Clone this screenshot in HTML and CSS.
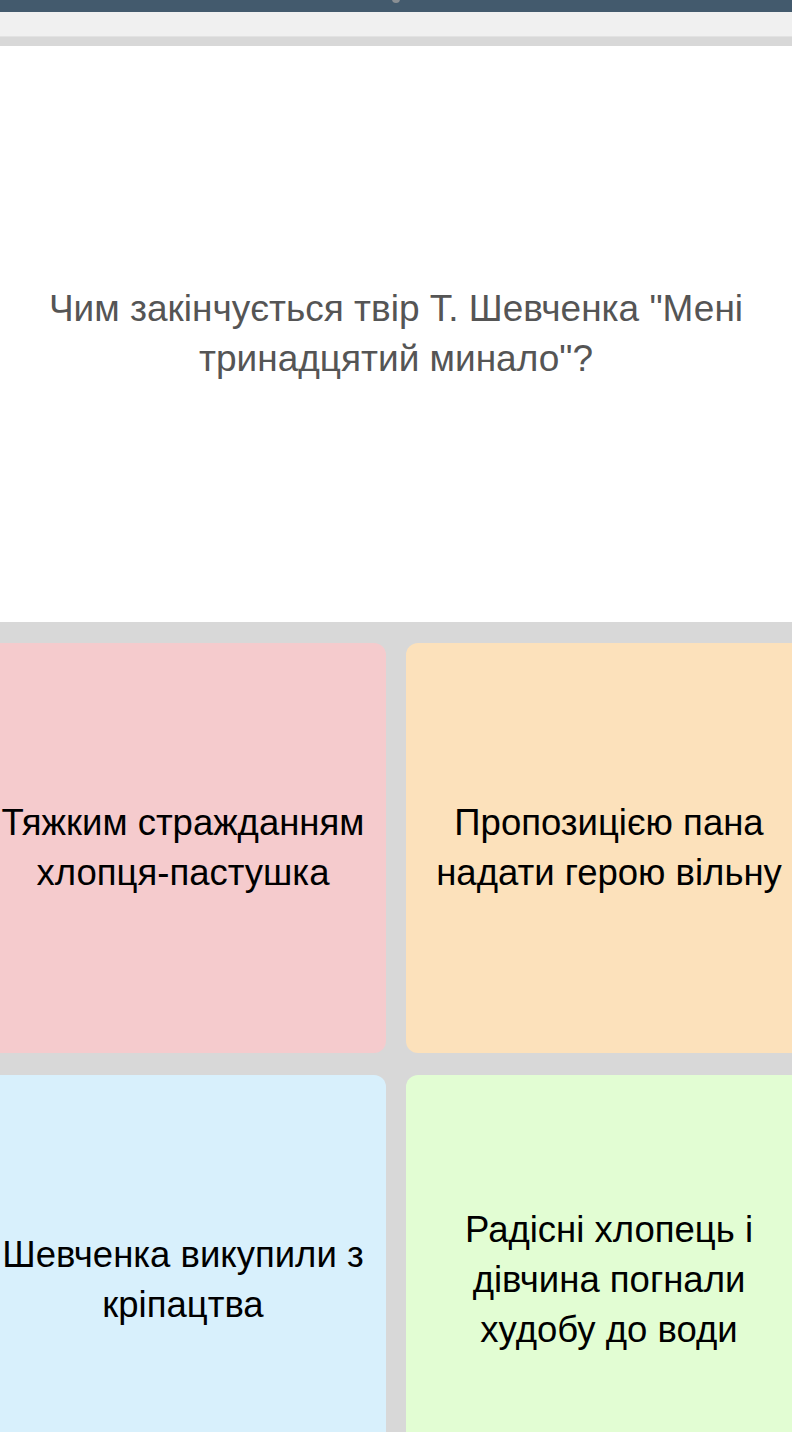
FILE: index.html
```html
<!DOCTYPE html>
<html lang="uk">
<head>
<meta charset="utf-8">
<link rel="stylesheet" href="styles.css">
</head>
<body>
<div class="topbar"><span class="topbar-dot"></span></div>
<div class="subbar"></div>
<div class="question">
  <p class="question-text">Чим закінчується твір Т. Шевченка "Мені тринадцятий минало"?</p>
</div>
<div class="answers">
  <div class="card card-red"><p>Тяжким стражданням хлопця-пастушка</p></div>
  <div class="card card-orange"><p>Пропозицією пана надати герою вільну</p></div>
  <div class="card card-blue"><p>Шевченка викупили з кріпацтва</p></div>
  <div class="card card-green"><p>Радісні хлопець і дівчина погнали худобу до води</p></div>
</div>
</body>
</html>
```
FILE: styles.css
```css
html, body {
  margin: 0;
  padding: 0;
}
body {
  width: 792px;
  height: 1432px;
  overflow: hidden;
  background: #d8d8d8;
  font-family: "Liberation Sans", Arial, sans-serif;
}
.topbar {
  height: 12px;
  background: #435a6d;
  display: flex;
  justify-content: center;
  align-items: flex-start;
}
.topbar-dot {
  width: 8px;
  height: 8px;
  margin-top: -5px;
  border-radius: 50%;
  background: #8a8f94;
}
.subbar {
  height: 24px;
  background: #f0f0f0;
  border-bottom: 1px solid #e2e2e2;
}
.question {
  margin-top: 9px;
  height: 576px;
  background: #ffffff;
  display: flex;
  align-items: center;
  justify-content: center;
  padding: 0 24px;
}
.question-text {
  margin: 0;
  text-align: center;
  color: #555555;
  font-size: 37px;
  line-height: 50px;
}
.answers {
  margin: 21px -20px 0;
  display: grid;
  grid-template-columns: 1fr 1fr;
  column-gap: 20px;
  row-gap: 22px;
}
.card {
  height: 410px;
  border-radius: 12px;
  display: flex;
  align-items: center;
  justify-content: center;
  padding: 0 10px;
  box-sizing: border-box;
}
.card p {
  margin: 0;
  text-align: center;
  color: #000000;
  font-size: 36.5px;
  line-height: 50px;
}
.card-red { background: #f5cbcd; }
.card-orange { background: #fce1bb; }
.card-blue { background: #d8f0fc; }
.card-green { background: #e2fdd3; }
```
